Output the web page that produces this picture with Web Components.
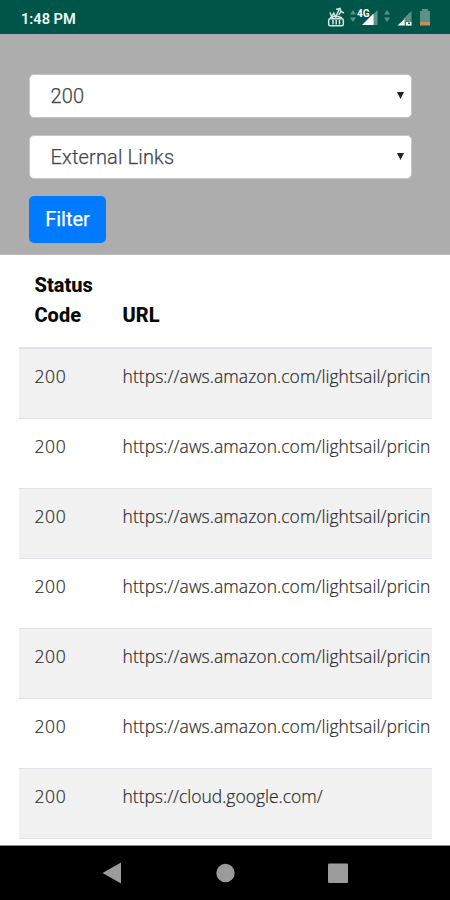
<!DOCTYPE html>
<html lang="en">
<head>
<meta charset="utf-8">
<title>Link filter</title>
<style>
html,body{margin:0;height:100%;background:#fff}
body{overflow:hidden}
</style>
</head>
<body>
<phone-screen>
  <status-bar slot="top">1:48 PM</status-bar>
  <filter-panel>
    <select-field>200</select-field>
    <select-field>External Links</select-field>
    <primary-button>Filter</primary-button>
  </filter-panel>
  <link-table></link-table>
  <nav-bar slot="bottom"></nav-bar>
</phone-screen>
<script>
function define(name, html) {
  const template = document.createElement('template');
  template.innerHTML = html;
  customElements.define(name, class extends HTMLElement {
    constructor() {
      super();
      this.attachShadow({mode: 'open'}).append(template.content.cloneNode(true));
    }
  });
}

define('phone-screen', `
<style>
:host{display:flex;flex-direction:column;width:450px;height:900px;overflow:hidden;background:#fff;font-family:Roboto,"Liberation Sans",sans-serif}
main{flex:1;min-height:0;overflow:hidden}
</style>
<slot name="top"></slot><main><slot></slot></main><slot name="bottom"></slot>`);

define('status-bar', `
<style>
:host{display:flex;justify-content:space-between;align-items:center;box-sizing:border-box;height:34px;padding:1px 0 0 21px;background:#005549;color:#eef7f5;font-size:14.6px;font-weight:600;flex:none}
span{padding-top:2px}
svg{display:block;font:700 10px Roboto,sans-serif}
</style>
<span><slot></slot></span>
<svg width="130" height="33" viewBox="320 1 130 33">
  <g fill="none" stroke="#d5e5e2" stroke-width="1.5">
    <path d="M330 12.500l1.800 4.500 2-3.800 2 3.800 3.500-8"/>
    <path d="M336 9.500l4-1 1 3 3 1.500M339 15l2-4"/>
    <rect x="328.7" y="18.7" width="14.6" height="7" rx="1.5"/>
    <path d="M333 20v4.5M336.2 20v4.5M339.5 20v4.5"/>
    <path d="M330 18q6-3.500 12 0"/>
  </g>
  <g fill="#5c9088">
    <path d="M350 14.500l3-4.500 3 4.500zM350 17.500h6l-3 4.500z"/>
    <path d="M384 14.500l3-4.500 3 4.500zM384 17.500h6l-3 4.500z"/>
    <path d="M377.500 10v15h-6v-9z"/>
    <path d="M411.500 11v14.500h-8v-7z"/>
    <path d="M422 9h6v2h2v11h-10V11h2z"/>
  </g>
  <path d="M362 25l11.500-11.500V25z" fill="#fff"/>
  <path d="M397.500 25.500l7-6.500v6.500zM406 22h5.500v3.500H406z" fill="#fff"/>
  <circle cx="409" cy="23.300" r="1" fill="#00594d"/>
  <path d="M420 22h10v3.500h-10z" fill="#d18a57"/>
  <text x="357" y="17" fill="#fff">4G</text>
</svg>`);

define('filter-panel', `
<style>
:host{display:flex;flex-direction:column;align-items:flex-start;gap:17px;box-sizing:border-box;height:221px;padding:40px 38px 0 29px;background:#adadad;border-bottom:1px solid #b9bbbc}
</style><slot></slot>`);

define('select-field', `
<style>
:host{display:flex;align-items:center;justify-content:space-between;box-sizing:border-box;width:383px;height:44px;padding:0 7px 0 20.500px;background:#fff;border:1px solid #c4c8ca;border-radius:5px;color:#42484e;font-size:20px;font-weight:300;letter-spacing:.15px;line-height:24px;-webkit-text-stroke:.25px #42484e}
svg{display:block;margin-bottom:2px}
</style>
<span><slot></slot></span><svg width="7" height="7"><path d="M0 0h7L3.500 7z" fill="#222"/></svg>`);

define('primary-button', `
<style>
:host{display:block}
button{display:block;box-sizing:border-box;width:77px;height:47px;padding:0;border:0;border-radius:5px;background:#007bff;color:#fff;font:400 20px/47px Roboto,sans-serif;-webkit-text-stroke:.25px #fff}
</style>
<button><slot></slot></button>`);

define('link-row', `
<style>
:host{display:flex;box-sizing:border-box;height:70px;padding:13px 0 0 15.500px;border-top:1px solid #dee2e6;color:#2a2a2a;font:300 17.500px/29px "Open Sans","Noto Sans",sans-serif;-webkit-text-stroke:.2px #2a2a2a;white-space:nowrap;overflow:hidden}
:host([striped]){background:#f1f1f1}
.code{width:88px;flex:none;letter-spacing:.6px}
.url{letter-spacing:var(--url-spacing,.05px)}
</style>
<span class="code"><slot name="code"></slot></span><span class="url"><slot></slot></span>`);

const aws = 'https://aws.amazon.com/lightsail/pricin';
const rows = [aws, aws, aws, aws, aws, aws, 'https://cloud.google.com/'];
define('link-table', `
<style>
:host{display:block;margin:0 18px 0 19px;overflow:hidden}
header{display:flex;align-items:flex-end;box-sizing:border-box;height:93px;padding:0 0 17px 15.500px;border-bottom:1px solid #dee2e6;font-weight:800;font-size:20px;line-height:30px;color:#080808}
header span:first-child{width:88px}
link-row:nth-of-type(7){--url-spacing:-.02px}
</style>
<header><span>Status<br>Code</span><span>URL</span></header>
${rows.map((u, i) => `<link-row ${i % 2 ? '' : 'striped'}><span slot="code">200</span>${u}</link-row>`).join('')}
<link-row></link-row>`);

define('nav-bar', `
<style>
:host{display:block;flex:none;height:55px;background:#000;box-sizing:border-box;border-top:1px solid #888}
svg{display:block}
</style>
<svg width="450" height="54" viewBox="0 846 450 54" fill="#9b9b9b">
<path d="M102.500 873L121 862.500V883.500z"/><circle cx="225.500" cy="873" r="9.200"/><rect x="328" y="863.500" width="20" height="19.500" rx="1"/>
</svg>`);
</script>
</body>
</html>
